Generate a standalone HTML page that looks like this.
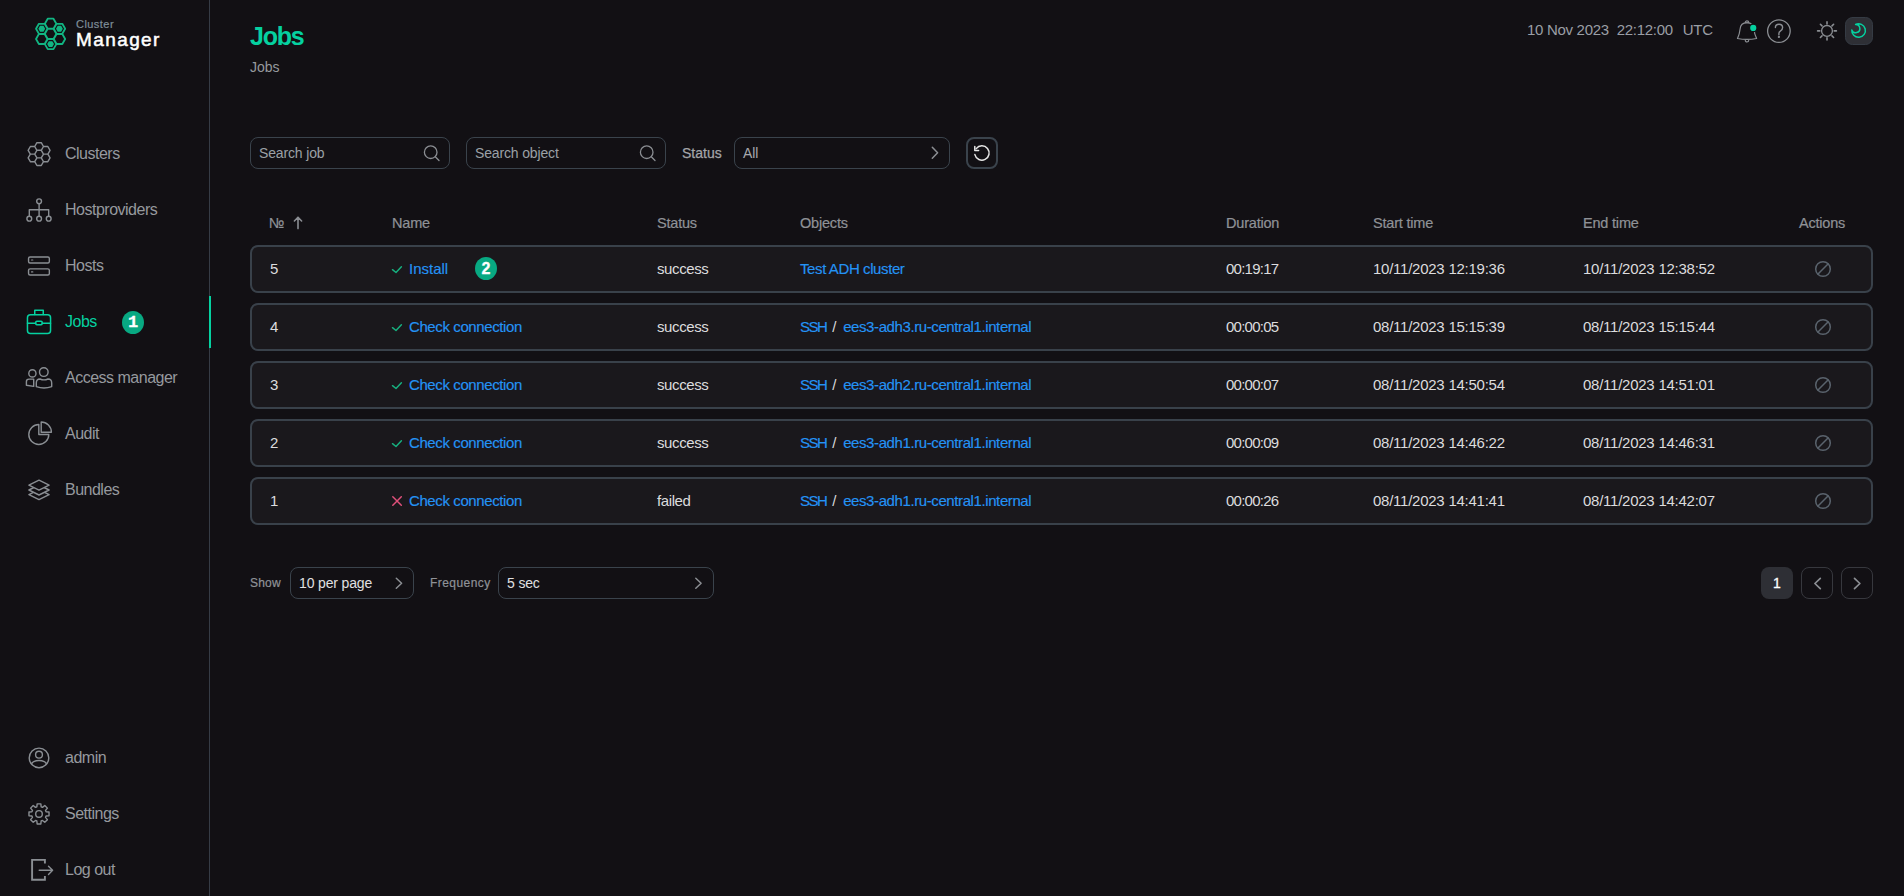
<!DOCTYPE html>
<html><head><meta charset="utf-8">
<style>
*{box-sizing:border-box;margin:0;padding:0}
html,body{width:1904px;height:896px;overflow:hidden;background:#121014;font-family:"Liberation Sans",sans-serif;}
.abs{position:absolute;white-space:nowrap}
#sideline{position:absolute;left:209px;top:0;width:1px;height:896px;background:#363c46}
#activebar{position:absolute;left:209px;top:296px;width:2px;height:52px;background:#05d1a0}
.nav{position:absolute;left:65px;font-size:16px;line-height:18px;color:#96999e;white-space:nowrap;letter-spacing:-0.5px}
.nav.active{color:#05d1a0}
.badge{position:absolute;width:22px;height:23px;border-radius:50%;background:#08a982;color:#fff;font-weight:bold;font-size:16px;line-height:23px;text-align:center;-webkit-text-stroke:0.3px #fff}
.b1{font-family:"Liberation Mono",monospace;font-size:17px}
.hdr{position:absolute;top:215px;color:#8f9297;font-size:14.5px;line-height:17px;letter-spacing:-0.2px;white-space:nowrap;-webkit-text-stroke:0.2px #8f9297}
.input{position:absolute;top:137px;height:32px;border:1px solid #3a434c;border-radius:8px}
.input span{position:absolute;left:8px;top:7px;font-size:14px;line-height:16px;color:#9ba0a6;letter-spacing:-0.15px;white-space:nowrap}
.row{position:absolute;left:250px;width:1623px;height:48px;border:2px solid #39414a;border-radius:8px;background:#1a181c}
.cell{position:absolute;font-size:15px;line-height:18px;color:#dcdcde;white-space:nowrap;letter-spacing:-0.4px}
.link{color:#2493f5;-webkit-text-stroke:0.15px #2493f5}
.num{letter-spacing:-0.25px}
.dur{letter-spacing:-0.75px}
.sep{color:#d8d8da;margin:0 7px 0 6px}
.lbl{position:absolute;top:576px;font-size:12px;line-height:14px;color:#8f9297;white-space:nowrap;letter-spacing:0.2px;-webkit-text-stroke:0.2px #8f9297}
#ov{position:absolute;left:0;top:0;z-index:5}
</style></head>
<body>
<!-- logo text -->
<div class="abs" style="left:76px;top:18px;font-size:11px;line-height:13px;color:#7f8e99;letter-spacing:0.45px;-webkit-text-stroke:0.2px #7f8e99">Cluster</div>
<div class="abs" style="left:76px;top:29px;font-size:19px;line-height:22px;color:#fff;letter-spacing:1.4px;-webkit-text-stroke:0.5px #fff">Manager</div>

<div class="nav" style="top:145px">Clusters</div>
<div class="nav" style="top:201px">Hostproviders</div>
<div class="nav" style="top:257px">Hosts</div>
<div class="nav active" style="top:313px">Jobs</div>
<div class="badge b1" style="left:122px;top:311px">1</div>
<div class="nav" style="top:369px">Access manager</div>
<div class="nav" style="top:425px">Audit</div>
<div class="nav" style="top:481px">Bundles</div>
<div class="nav" style="top:749px">admin</div>
<div class="nav" style="top:805px">Settings</div>
<div class="nav" style="top:861px">Log out</div>
<div id="sideline"></div>
<div id="activebar"></div>

<!-- header -->
<div class="abs" style="left:250px;top:22px;font-size:25px;line-height:29px;font-weight:bold;color:#05d1a0;letter-spacing:-1.2px">Jobs</div>
<div class="abs" style="left:250px;top:59px;font-size:14px;line-height:16px;color:#96999e">Jobs</div>
<div class="abs" style="left:1527px;top:21px;font-size:15px;line-height:18px;color:#9a9ea5;letter-spacing:-0.3px">10 Nov 2023<span style="margin-left:8px">22:12:00</span><span style="margin-left:10px">UTC</span></div>

<!-- filters -->
<div class="input" style="left:250px;width:200px"><span>Search job</span></div>
<div class="input" style="left:466px;width:200px"><span>Search object</span></div>
<div class="abs" style="left:682px;top:145px;font-size:14px;line-height:16px;color:#a3a5a9;letter-spacing:0px;-webkit-text-stroke:0.25px #a3a5a9">Status</div>
<div class="input" style="left:734px;width:216px"><span style="color:#a6a9ad">All</span></div>
<div class="input" style="left:966px;width:32px;border-width:2px"></div>

<!-- table header -->
<div class="hdr" style="left:269px">№</div>
<div class="hdr" style="left:392px">Name</div>
<div class="hdr" style="left:657px">Status</div>
<div class="hdr" style="left:800px">Objects</div>
<div class="hdr" style="left:1226px">Duration</div>
<div class="hdr" style="left:1373px">Start time</div>
<div class="hdr" style="left:1583px">End time</div>
<div class="hdr" style="left:1799px">Actions</div>

<!-- rows -->
<div class="row" style="top:245px"></div>
<div class="cell" style="left:270px;top:260px">5</div>
<div class="cell link" style="left:409px;top:260px;letter-spacing:0px">Install</div>
<div class="badge b2" style="left:475px;top:257px">2</div>
<div class="cell" style="left:657px;top:260px">success</div>
<div class="cell link" style="left:800px;top:260px">Test ADH cluster</div>
<div class="cell dur" style="left:1226px;top:260px">00:19:17</div>
<div class="cell num" style="left:1373px;top:260px">10/11/2023 12:19:36</div>
<div class="cell num" style="left:1583px;top:260px">10/11/2023 12:38:52</div>
<div class="row" style="top:303px"></div>
<div class="cell" style="left:270px;top:318px">4</div>
<div class="cell link" style="left:409px;top:318px">Check connection</div>
<div class="cell" style="left:657px;top:318px">success</div>
<div class="cell" style="left:800px;top:318px"><span class="link" style="letter-spacing:-1.5px">SSH</span><span class="sep">/</span><span class="link">ees3-adh3.ru-central1.internal</span></div>
<div class="cell dur" style="left:1226px;top:318px">00:00:05</div>
<div class="cell num" style="left:1373px;top:318px">08/11/2023 15:15:39</div>
<div class="cell num" style="left:1583px;top:318px">08/11/2023 15:15:44</div>
<div class="row" style="top:361px"></div>
<div class="cell" style="left:270px;top:376px">3</div>
<div class="cell link" style="left:409px;top:376px">Check connection</div>
<div class="cell" style="left:657px;top:376px">success</div>
<div class="cell" style="left:800px;top:376px"><span class="link" style="letter-spacing:-1.5px">SSH</span><span class="sep">/</span><span class="link">ees3-adh2.ru-central1.internal</span></div>
<div class="cell dur" style="left:1226px;top:376px">00:00:07</div>
<div class="cell num" style="left:1373px;top:376px">08/11/2023 14:50:54</div>
<div class="cell num" style="left:1583px;top:376px">08/11/2023 14:51:01</div>
<div class="row" style="top:419px"></div>
<div class="cell" style="left:270px;top:434px">2</div>
<div class="cell link" style="left:409px;top:434px">Check connection</div>
<div class="cell" style="left:657px;top:434px">success</div>
<div class="cell" style="left:800px;top:434px"><span class="link" style="letter-spacing:-1.5px">SSH</span><span class="sep">/</span><span class="link">ees3-adh1.ru-central1.internal</span></div>
<div class="cell dur" style="left:1226px;top:434px">00:00:09</div>
<div class="cell num" style="left:1373px;top:434px">08/11/2023 14:46:22</div>
<div class="cell num" style="left:1583px;top:434px">08/11/2023 14:46:31</div>
<div class="row" style="top:477px"></div>
<div class="cell" style="left:270px;top:492px">1</div>
<div class="cell link" style="left:409px;top:492px">Check connection</div>
<div class="cell" style="left:657px;top:492px">failed</div>
<div class="cell" style="left:800px;top:492px"><span class="link" style="letter-spacing:-1.5px">SSH</span><span class="sep">/</span><span class="link">ees3-adh1.ru-central1.internal</span></div>
<div class="cell dur" style="left:1226px;top:492px">00:00:26</div>
<div class="cell num" style="left:1373px;top:492px">08/11/2023 14:41:41</div>
<div class="cell num" style="left:1583px;top:492px">08/11/2023 14:42:07</div>

<!-- footer -->
<div class="lbl" style="left:250px">Show</div>
<div class="input" style="left:290px;top:567px;width:124px"><span style="color:#e0e0e2">10 per page</span></div>
<div class="lbl" style="left:430px;letter-spacing:0.45px">Frequency</div>
<div class="input" style="left:498px;top:567px;width:216px"><span style="color:#e0e0e2">5 sec</span></div>
<div class="abs" style="left:1761px;top:567px;width:32px;height:32px;border-radius:8px;background:#2e2f35;color:#fff;font-size:14px;line-height:32px;text-align:center;-webkit-text-stroke:0.3px #fff">1</div>
<div class="input" style="left:1801px;top:567px;width:32px;border-color:#37383e"></div>
<div class="input" style="left:1841px;top:567px;width:32px;border-color:#37383e"></div>

<svg id="ov" width="1904" height="896" viewBox="0 0 1904 896" fill="none" stroke-linecap="round" stroke-linejoin="round">
  <!-- logo -->
  <path d="M56.35 33.90L53.48 38.88L47.73 38.88L44.85 33.90L47.73 28.92L53.48 28.92ZM56.35 23.70L53.48 28.68L47.73 28.68L44.85 23.70L47.73 18.72L53.48 18.72ZM56.35 44.10L53.48 49.08L47.73 49.08L44.85 44.10L47.73 39.12L53.48 39.12ZM65.18 28.80L62.31 33.78L56.56 33.78L53.68 28.80L56.56 23.82L62.31 23.82ZM65.18 39.00L62.31 43.98L56.56 43.98L53.68 39.00L56.56 34.02L62.31 34.02ZM47.52 28.80L44.64 33.78L38.89 33.78L36.02 28.80L38.89 23.82L44.64 23.82ZM47.52 39.00L44.64 43.98L38.89 43.98L36.02 39.00L38.89 34.02L44.64 34.02Z" stroke="#11b582" stroke-width="1.8"/>
  <path d="M54.00 44.10L52.30 47.04L48.90 47.04L47.20 44.10L48.90 41.16L52.30 41.16ZM62.83 28.80L61.13 31.74L57.73 31.74L56.03 28.80L57.73 25.86L61.13 25.86ZM45.17 28.80L43.47 31.74L40.07 31.74L38.37 28.80L40.07 25.86L43.47 25.86Z" fill="#11b582"/>
  <g stroke="#8a8e93" stroke-width="1.4">
    <!-- clusters -->
    <path d="M43.48 154.10L41.29 157.89L36.91 157.89L34.72 154.10L36.91 150.31L41.29 150.31ZM43.48 146.51L41.29 150.31L36.91 150.31L34.72 146.51L36.91 142.72L41.29 142.72ZM43.48 161.69L41.29 165.48L36.91 165.48L34.72 161.69L36.91 157.89L41.29 157.89ZM50.05 150.31L47.86 154.10L43.48 154.10L41.29 150.31L43.48 146.51L47.86 146.51ZM50.05 157.89L47.86 161.69L43.48 161.69L41.29 157.89L43.48 154.10L47.86 154.10ZM36.91 150.31L34.72 154.10L30.34 154.10L28.15 150.31L30.34 146.51L34.72 146.51ZM36.91 157.89L34.72 161.69L30.34 161.69L28.15 157.89L30.34 154.10L34.72 154.10Z"/>
    <!-- hostproviders -->
    <circle cx="39.1" cy="201.3" r="2.4"/>
    <path d="M39.1 203.7V216.3M29.3 216.3V209.8H48.7V216.3"/>
    <circle cx="29.3" cy="218.7" r="2.4"/><circle cx="39.1" cy="218.7" r="2.4"/><circle cx="48.7" cy="218.7" r="2.4"/>
    <!-- hosts -->
    <rect x="28.55" y="256.95" width="20.8" height="6.1" rx="1.5"/>
    <rect x="28.55" y="268.85" width="20.8" height="6.1" rx="1.5"/>
    <path d="M31.5 260H32.8M31.5 271.9H32.8" stroke-width="1.2"/>
    <!-- access manager -->
    <circle cx="43.8" cy="372.1" r="4.3"/>
    <path d="M36.3 386.6V383Q36.3 379 40 379Q42 379.9 44 379.9Q46 379.9 48 379Q51.7 379 51.7 383V386.6Q44 389.4 36.3 386.6Z"/>
    <circle cx="32.4" cy="373.4" r="3.6"/>
    <path d="M33.7 379.1H29Q26.4 379.1 26.4 381.7V385.2L33.7 386.4Z"/>
    <!-- audit -->
    <path d="M38.8 424.5V434.5H48.8A10 10 0 1 1 38.8 424.5Z"/>
    <path d="M41.2 422V432.2H51.4A10.2 10.2 0 0 0 41.2 422Z"/>
    <!-- bundles -->
    <path d="M28.9 494.6L39 489.6L49.1 494.6L39 499.6Z" fill="#121014"/>
    <path d="M28.9 490L39 485L49.1 490L39 495Z" fill="#121014"/>
    <path d="M28.9 485.2L39 480.2L49.1 485.2L39 490.2Z" fill="#121014"/>
    <!-- admin -->
    <circle cx="39" cy="757.9" r="9.8"/>
    <circle cx="39" cy="754.7" r="3.4"/>
    <clipPath id="clp"><circle cx="39" cy="757.9" r="9.8"/></clipPath>
    <ellipse cx="39" cy="764.3" rx="7.4" ry="3.8" clip-path="url(#clp)"/>
    <!-- settings -->
    <path d="M36.84 806.82L37.14 803.87L40.86 803.87L41.16 806.82L42.47 807.37L44.78 805.49L47.41 808.12L45.53 810.43L46.08 811.74L49.03 812.04L49.03 815.76L46.08 816.06L45.53 817.37L47.41 819.68L44.78 822.31L42.47 820.43L41.16 820.98L40.86 823.93L37.14 823.93L36.84 820.98L35.53 820.43L33.22 822.31L30.59 819.68L32.47 817.37L31.92 816.06L28.97 815.76L28.97 812.04L31.92 811.74L32.47 810.43L30.59 808.12L33.22 805.49L35.53 807.37Z" stroke-width="1.4"/>
    <circle cx="39" cy="813.9" r="3.3" stroke-width="1.4"/>
    <!-- logout -->
    <path d="M44.9 863.6V859.9H32.1V879.8H44.9V876.1" stroke-width="1.9" stroke-linecap="butt" stroke-linejoin="miter"/>
    <path d="M39.2 870.3H52.2M48.5 866.2L52.6 870.3L48.5 874.4"/>
  </g>
  <!-- jobs briefcase -->
  <g stroke="#05d1a0" stroke-width="1.5">
    <path d="M34.75 314.5V310.25H43.25V314.5"/>
    <rect x="27.45" y="314.75" width="23.1" height="18.8" rx="3"/>
    <path d="M27.45 323.2H35.75M42.15 323.2H50.55"/>
    <rect x="35.75" y="321.15" width="6.4" height="3.7" rx="1"/>
  </g>
  <!-- header icons -->
  <g stroke="#8b8e93" stroke-width="1.2">
    <path d="M1737.5 38.5Q1739.6 34 1740.1 29Q1740.6 23 1747 22.7Q1753.4 23 1753.9 29Q1754.4 34 1756.6 38.5Q1747 40.2 1737.5 38.5Z"/>
    <path d="M1745.3 22.6A1.7 1.7 0 0 1 1748.7 22.6"/>
    <path d="M1745.3 40.3A1.7 1.7 0 0 0 1748.7 40.3"/>
    <circle cx="1778.9" cy="31.1" r="11.3" stroke-width="1.3"/>
    <path d="M1775.4 27.6Q1775.4 24.3 1779 24.3Q1782.6 24.3 1782.6 27.6Q1782.6 29.7 1780.6 30.8Q1778.9 31.8 1778.9 33.6V34.8" stroke-width="1.4"/>
    <circle cx="1778.9" cy="36.9" r="0.5" stroke-width="1.3"/>
    <circle cx="1827" cy="30.9" r="5.4" stroke-width="1.3"/>
    <path d="M1827 21.9V24M1827 37.8V40M1817.6 30.9H1819.8M1834.2 30.9H1836.4M1820.4 24.3L1822 25.9M1833.6 24.3L1832 25.9M1820.4 37.5L1822 35.9M1833.6 37.5L1832 35.9" stroke-width="1.6"/>
  </g>
  <circle cx="1753.25" cy="27.9" r="3.75" fill="#05d1a0" stroke="#121014" stroke-width="1.3"/>
  <rect x="1845.5" y="17.5" width="27" height="27" rx="7" fill="#2e2f35" stroke="#353b44" stroke-width="1"/>
  <path d="M1855.6 24.4A6.8 6.8 0 1 1 1851.8 29.9A4.14 4.14 0 1 0 1855.6 24.4Z" stroke="#05d1a0" stroke-width="1.5"/>
  <!-- filter icons -->
  <g stroke="#8b8e93" stroke-width="1.3">
    <circle cx="430.7" cy="152.2" r="6.3"/><path d="M435.3 156.8L439 160.5"/>
    <circle cx="646.7" cy="152.2" r="6.3"/><path d="M651.3 156.8L655 160.5"/>
    <path d="M932.3 147.3L937.6 152.8L932.3 158.3" stroke-width="1.5"/>
    <path d="M396.3 578.3L401.6 583.3L396.3 588.3" stroke-width="1.5"/>
    <path d="M695.8 578.3L701.1 583.3L695.8 588.3" stroke-width="1.5"/>
    <path d="M1820.3 578.4L1814.9 583.5L1820.3 588.6" stroke-width="1.7"/>
    <path d="M1854.5 578.4L1859.9 583.5L1854.5 588.6" stroke-width="1.7"/>
    <path d="M298 228.6V217.4M294.4 221L298 217.3L301.6 221" stroke-width="1.6"/>
  </g>
  <g stroke="#e6e6e6" stroke-width="1.5">
    <path d="M974.9 154.6A7.2 7.2 0 1 0 976.2 148.6"/>
    <path d="M974.8 146.6V150.6H978.6"/>
  </g>
  <path d="M392.5 269.7L396 272.5L401.4 266.8" stroke="#17b07f" stroke-width="1.5" fill="none"/>
<circle cx="1823" cy="269.0" r="7.3" stroke="#5a636d" stroke-width="1.5" fill="none"/><path d="M1818 274.0L1828 264.0" stroke="#5a636d" stroke-width="1.5"/>
<path d="M392.5 327.7L396 330.5L401.4 324.8" stroke="#17b07f" stroke-width="1.5" fill="none"/>
<circle cx="1823" cy="327.0" r="7.3" stroke="#5a636d" stroke-width="1.5" fill="none"/><path d="M1818 332.0L1828 322.0" stroke="#5a636d" stroke-width="1.5"/>
<path d="M392.5 385.7L396 388.5L401.4 382.8" stroke="#17b07f" stroke-width="1.5" fill="none"/>
<circle cx="1823" cy="385.0" r="7.3" stroke="#5a636d" stroke-width="1.5" fill="none"/><path d="M1818 390.0L1828 380.0" stroke="#5a636d" stroke-width="1.5"/>
<path d="M392.5 443.7L396 446.5L401.4 440.8" stroke="#17b07f" stroke-width="1.5" fill="none"/>
<circle cx="1823" cy="443.0" r="7.3" stroke="#5a636d" stroke-width="1.5" fill="none"/><path d="M1818 448.0L1828 438.0" stroke="#5a636d" stroke-width="1.5"/>
<path d="M392.8 496.8L401.3 505.3M401.3 496.8L392.8 505.3" stroke="#e0507a" stroke-width="1.5" fill="none"/>
<circle cx="1823" cy="501.0" r="7.3" stroke="#5a636d" stroke-width="1.5" fill="none"/><path d="M1818 506.0L1828 496.0" stroke="#5a636d" stroke-width="1.5"/>
</svg>
</body></html>
